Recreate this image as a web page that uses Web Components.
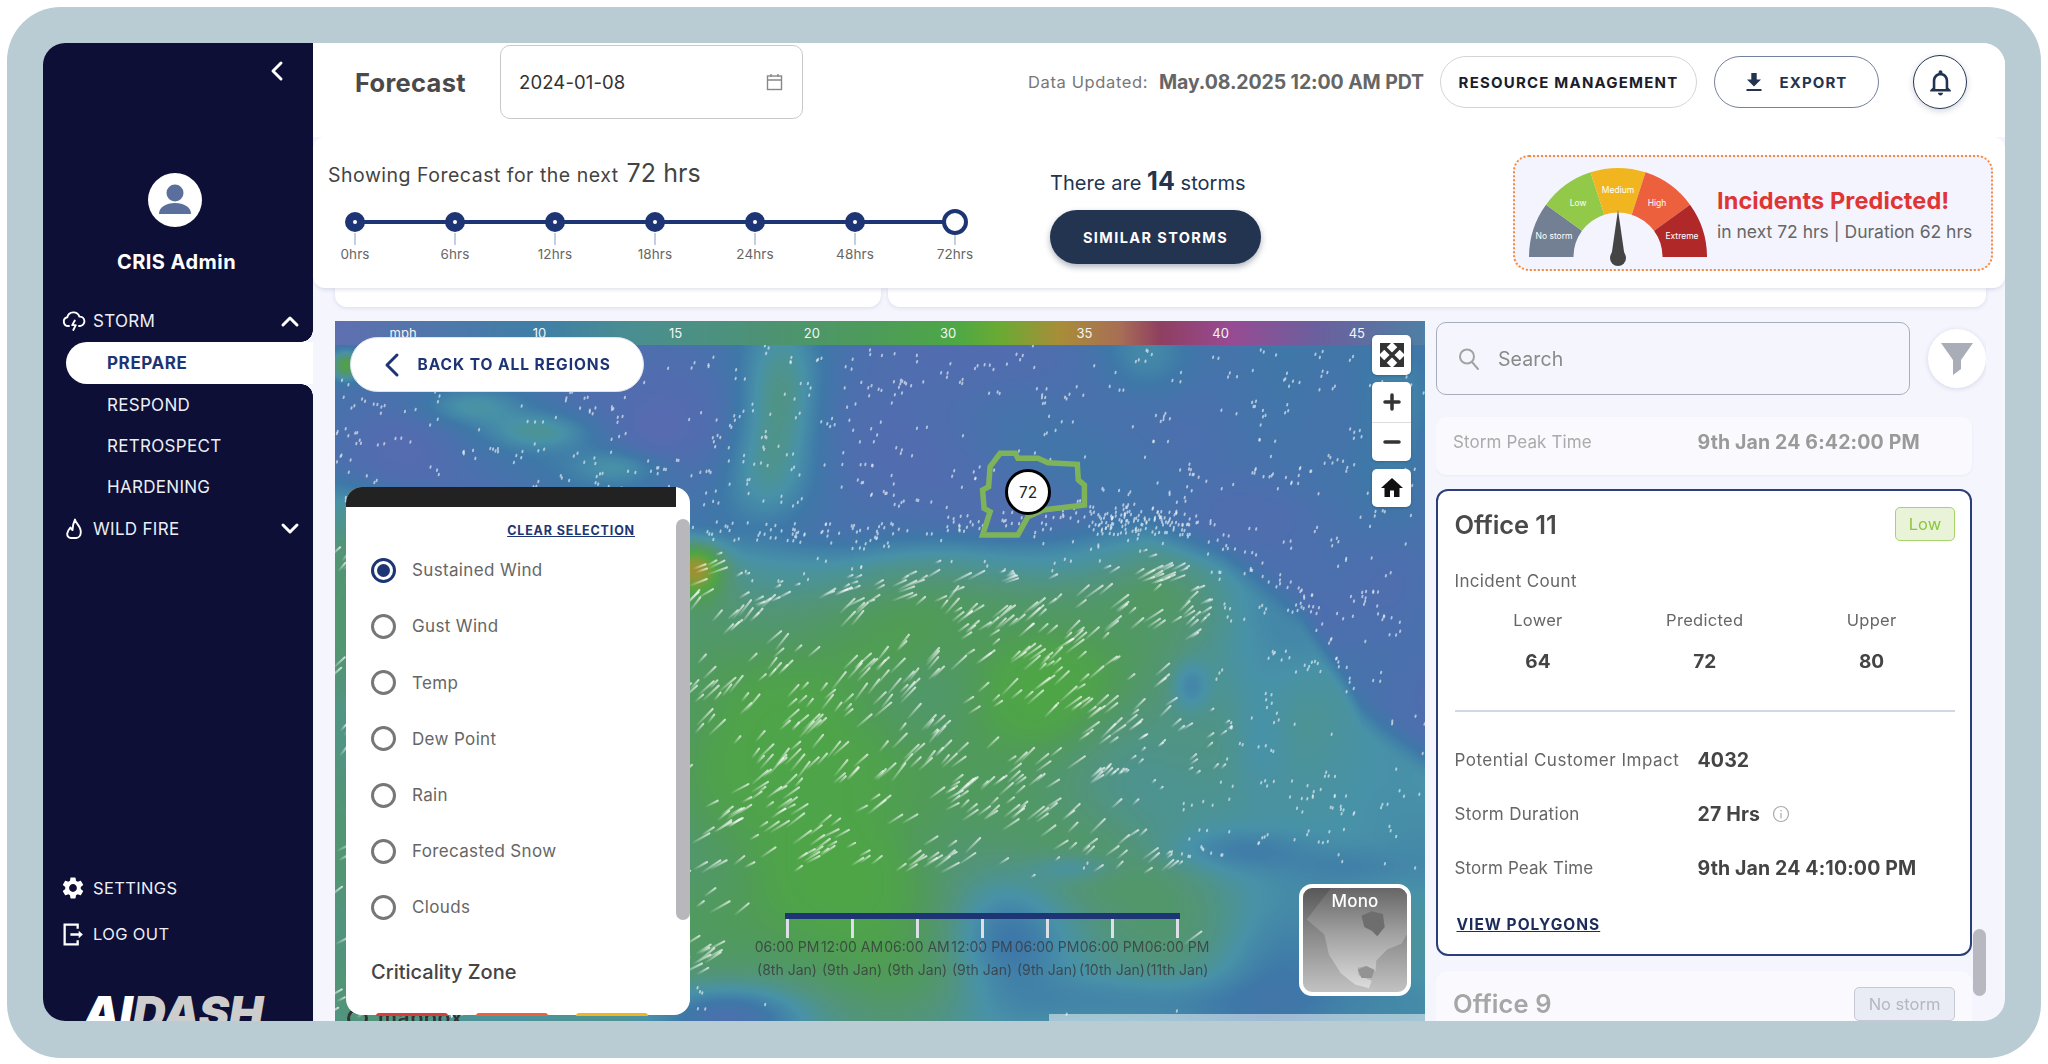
<!DOCTYPE html>
<html lang="en"><head><meta charset="utf-8"><title>Forecast</title>
<style>
html,body{margin:0;background:#fff;font-family:Inter,"Noto Sans",sans-serif;overflow:hidden}
</style></head><body>
<ai-app>
  <ai-sidebar slot="side">
    <ai-nav-row icon="cloud" trail="up">STORM</ai-nav-row>
    <ai-nav-row sub active>PREPARE</ai-nav-row>
    <ai-nav-row sub>RESPOND</ai-nav-row>
    <ai-nav-row sub>RETROSPECT</ai-nav-row>
    <ai-nav-row sub>HARDENING</ai-nav-row>
    <ai-nav-row icon="flame" trail="down">WILD FIRE</ai-nav-row>
  </ai-sidebar>
  <ai-topbar slot="main"></ai-topbar>
  <ai-forecast-panel slot="main"></ai-forecast-panel>
  <ai-peek-row slot="main"></ai-peek-row>
  <ai-content slot="main">
    <ai-map></ai-map>
    <ai-side-list></ai-side-list>
  </ai-content>
</ai-app>
<script>
const def=(name,css,html,init)=>customElements.define(name,class extends HTMLElement{
  constructor(){super();this.attachShadow({mode:'open'}).innerHTML=`<style>${css}</style>${typeof html==='function'?html(this):html}`}
  connectedCallback(){init&&init(this)}
});
const NAVY='#1e3575',INK='#22344f';
const I={
 cloud:'<svg width="24" height="24" viewBox="0 0 24 24" fill="none" stroke="#fff" stroke-width="1.9" stroke-linecap="round" stroke-linejoin="round"><path d="M7 17H6.2a4.4 4.4 0 0 1-.9-8.7A6.3 6.3 0 0 1 17.4 7.6 4.7 4.7 0 0 1 18 17h-1"/><path d="M12.8 11.5l-2.6 4.6h3.6L11.3 21"/></svg>',
 flame:'<svg width="24" height="24" viewBox="0 0 24 24" fill="none" stroke="#fff" stroke-width="1.9" stroke-linejoin="round"><path d="M13 2.5c.4 3.5 5.8 6.6 5.8 12.4 0 3.4-2 6.100-4.600 6.100H8.800C6.600 21 5 19 5.200 16.600c.2-2.600 2-4.600 3.300-6.100.8 1.500 1.300 2.300 2 2.600C10.700 9.500 11.500 5.500 13 2.500z"/></svg>',
 up:'<svg width="20" height="14" viewBox="0 0 20 14" fill="none" stroke="#fff" stroke-width="3" stroke-linecap="round" stroke-linejoin="round"><path d="M3 11l7-7 7 7"/></svg>',
 down:'<svg width="20" height="14" viewBox="0 0 20 14" fill="none" stroke="#fff" stroke-width="3" stroke-linecap="round" stroke-linejoin="round"><path d="M3 3l7 7 7-7"/></svg>',
 gear:'<svg width="26" height="26" viewBox="0 0 24 24" fill="#fff"><path d="M19.14 12.94c.04-.3.06-.61.06-.94 0-.32-.02-.64-.07-.94l2.03-1.58a.49.49 0 0 0 .12-.61l-1.92-3.32a.488.488 0 0 0-.59-.22l-2.39.96c-.5-.38-1.03-.7-1.62-.94l-.36-2.54a.484.484 0 0 0-.48-.41h-3.84c-.24 0-.43.17-.47.41l-.36 2.54c-.59.24-1.13.57-1.62.94l-2.39-.96c-.22-.08-.47 0-.59.22L2.74 8.87c-.12.21-.08.47.12.61l2.03 1.58c-.05.3-.09.63-.09.94s.02.64.07.94l-2.03 1.58a.49.49 0 0 0-.12.61l1.92 3.32c.12.22.37.29.59.22l2.39-.96c.5.38 1.03.7 1.62.94l.36 2.54c.05.24.24.41.48.41h3.84c.24 0 .44-.17.47-.41l.36-2.54c.59-.24 1.13-.56 1.62-.94l2.39.96c.22.08.47 0 .59-.22l1.92-3.32c.12-.22.07-.47-.12-.61l-2.01-1.58zM12 15.6c-1.98 0-3.6-1.62-3.6-3.6s1.62-3.6 3.6-3.6 3.6 1.62 3.6 3.6-1.62 3.6-3.6 3.6z"/></svg>',
 logout:'<svg width="25" height="25" viewBox="0 0 24 24" fill="none" stroke="#fff" stroke-width="2.2"><path d="M16 6.500V2.500H3.500v19H16v-4"/><path d="M9 12h9" /><path d="M17 8.500l4 3.500-4 3.500z" fill="#fff" stroke="none"/></svg>'
};

def('ai-app',`
 :host{display:block;position:relative;margin:7px 0 0 7px;width:2034px;height:1051px;box-sizing:border-box;background:#b9cbd3;border-radius:54px;padding:36px 36px 37px}
 .in{display:grid;grid-template-columns:270px 1fr;height:100%;border-radius:22px;overflow:hidden;background:#f4f5fd}
 .m{display:flex;flex-direction:column;min-width:0;overflow:hidden;border-radius:0}
`,`<div class="in"><slot name="side"></slot><div class="m"><slot name="main"></slot></div></div>`);

def('ai-sidebar',`
 :host{display:flex;flex-direction:column;background:#0d0f36;color:#fff;height:978px;overflow:hidden}
 .tr{height:56px;display:flex;align-items:center;justify-content:flex-end;padding-right:28px;flex:none}
 .av{width:54px;height:54px;border-radius:50%;background:#fff;margin:74px 0 0 105px;flex:none;display:flex}
 .nm{font-weight:700;font-size:20px;letter-spacing:.45px;line-height:24px;text-align:center;margin-top:23px;margin-left:-3px;flex:none}
 .nav{margin-top:26px;flex:none}
 .low{margin-top:auto;flex:none}
 .row{height:46px;display:flex;align-items:center;gap:7px;padding-left:17px;font-size:16.500px;font-weight:400;letter-spacing:.35px;color:#eceef5}
 .row:nth-child(2){gap:7.500px;padding-left:17.500px}
 .logo{height:26px;margin:38px 0 0 40px;overflow:hidden;font-weight:900;font-style:italic;font-size:46px;line-height:34px;letter-spacing:-.2px;color:#fff;white-space:nowrap;flex:none}
 .logo b{color:#cdcdcd;font-weight:900}
`,`<div class="tr"><svg width="16" height="22" viewBox="0 0 16 22" fill="none" stroke="#fff" stroke-width="3" stroke-linecap="round" stroke-linejoin="round"><path d="M12 3l-8 8 8 8"/></svg></div>
 <div class="av"><svg width="54" height="54" viewBox="0 0 54 54" fill="#5a6f9c"><circle cx="27" cy="20" r="8.500"/><path d="M11 41c0-7 7-11 16-11s16 4 16 11z"/></svg></div>
 <div class="nm">CRIS Admin</div>
 <div class="nav"><slot></slot></div>
 <div class="low"><div class="row">${I.gear}<span>SETTINGS</span></div><div class="row">${I.logout}<span>LOG OUT</span></div></div>
 <div class="logo">AI<b>DASH</b></div>`);

def('ai-nav-row',`
 :host{display:flex;align-items:center;position:relative;height:41.300px;box-sizing:border-box;font-size:17px;letter-spacing:.3px;color:#eceef5;padding-left:19px}
 :host([icon]){height:42px}
 :host([sub]){padding-left:64px}
 :host([active]){height:42px;margin-left:23px;padding-left:41px;background:#fff;color:${NAVY};font-weight:700;border-radius:21px 0 0 21px;letter-spacing:.6px}
 :host([active])::before,:host([active])::after{content:"";position:absolute;right:0;width:12px;height:12px;background:radial-gradient(circle at 0 0,transparent 11.5px,#f4f5fd 12px)}
 :host([active])::before{top:-12px}
 :host([active])::after{bottom:-12px;background:radial-gradient(circle at 0 100%,transparent 11.5px,#f4f5fd 12px)}
 .ic{width:31px;display:flex;flex:none}
 .tl{margin-left:auto;padding-right:13px;display:flex}
`,h=>{const a=h.getAttribute('icon'),t=h.getAttribute('trail');return `${a?`<span class="ic">${I[a]}</span>`:''}<slot></slot>${t?`<span class="tl">${I[t]}</span>`:''}`});

def('ai-pill',`
 :host{display:inline-flex;align-items:center;justify-content:center;gap:14px;height:52px;box-sizing:border-box;border-radius:26px;background:#fff;border:1.5px solid #d2d4d8;font-weight:700;font-size:15px;letter-spacing:1.2px;color:#1c1c2a;flex:none}
 :host([dark]){border-color:#74819a;color:${INK};letter-spacing:1.1px}
`,`<slot></slot>`);

def('ai-topbar',`
 :host{display:flex;align-items:center;flex:none;height:78px;margin-bottom:16px;background:#fff;padding-left:42px;box-shadow:0 16px 0 #fff}
 h1{margin:0;width:145px;flex:none;font-size:25.500px;font-weight:700;color:#4a4a4a;letter-spacing:.3px}
 .date{width:303px;height:74px;box-sizing:border-box;border:1.5px solid #c9c9c9;border-radius:10px;display:flex;align-items:center;justify-content:space-between;padding:0 19px 0 18px;font-size:18.500px;letter-spacing:.12px;color:#333;flex:none}
 .lb{margin-left:225px;font-size:16.500px;color:#777;width:131px;flex:none;letter-spacing:.62px;white-space:nowrap}
 .v{font-size:19.500px;font-weight:700;color:#666;width:281px;flex:none;white-space:nowrap;letter-spacing:-.1px}
 ai-pill:nth-of-type(1){width:257px}
 ai-pill:nth-of-type(2){width:165px;margin-left:17px}
 .bell{width:54px;height:54px;margin-left:34px;box-sizing:border-box;border:1.5px solid ${INK};border-radius:50%;display:flex;align-items:center;justify-content:center;box-shadow:0 2px 6px rgba(30,40,80,.2);flex:none}
`,`<h1>Forecast</h1>
 <div class="date"><span>2024-01-08</span><svg width="17" height="18" viewBox="0 0 17 18" fill="none" stroke="#888" stroke-width="1.400"><rect x="1.500" y="3" width="14" height="13.500"/><path d="M1.500 7h14M5 1v3M12 1v3"/></svg></div>
 <span class="lb">Data Updated:</span><span class="v">May.08.2025 12:00 AM PDT</span>
 <ai-pill>RESOURCE MANAGEMENT</ai-pill>
 <ai-pill dark><svg width="24" height="24" viewBox="0 0 24 24" fill="${INK}" style="margin-left:-4px"><path d="M19 9.500h-4.300V3H9.300v6.500H5l7 7zM4.500 19h15v2h-15z"/></svg><span>EXPORT</span></ai-pill>
 <div class="bell"><svg width="31" height="31" viewBox="0 0 24 24" fill="${INK}"><path d="M12 22c1.100 0 2-.9 2-2h-4c0 1.100.9 2 2 2zm6-6v-5c0-3.070-1.630-5.640-4.500-6.320V4c0-.83-.67-1.500-1.500-1.500s-1.500.67-1.500 1.500v.68C7.640 5.360 6 7.920 6 11v5l-2 2v1h16v-1l-2-2zm-2 1H8v-6c0-2.480 1.510-4.500 4-4.500s4 2.020 4 4.500v6z"/></svg></div>`);

def('ai-stepper',`
 :host{display:grid;grid-template-columns:repeat(7,100px);margin:19px 0 0 -23px}
 .s{display:flex;flex-direction:column;align-items:center;position:relative}
 .n{height:26px;display:flex;align-items:center;justify-content:center;position:relative;z-index:1}
 .d{width:20px;height:20px;border-radius:50%;background:${NAVY};display:flex;align-items:center;justify-content:center}
 .d i{width:4px;height:4px;background:#fff;border-radius:50%}
 .last .d{width:26px;height:26px;background:#fff;border:4px solid ${NAVY};box-sizing:border-box}
 .last .d i{display:none}
 .s:not(.last)::after{content:"";position:absolute;left:50%;width:100%;top:11px;height:4px;background:${NAVY}}
 .t{width:2px;height:12px;background:#c5cfe3;margin-top:-2px}
 .l{font-size:13.500px;line-height:18px;color:#666;white-space:nowrap;letter-spacing:.1px}
`,`${['0hrs','6hrs','12hrs','18hrs','24hrs','48hrs','72hrs'].map((t,i)=>`<div class="s${i==6?' last':''}"><div class="n"><div class="d"><i></i></div></div><div class="t"></div><div class="l">${t}</div></div>`).join('')}`);

def('ai-gauge',`:host{display:block;width:180px;height:100px;flex:none} svg{display:block} text{font-family:Inter,sans-serif;fill:#fff;font-size:8.500px;text-anchor:middle}`,()=>{
 const R=89,r=44.5,c=['#737f92','#92c949','#f1b61f','#ec603d','#b02828'];
 const p=(rad,a)=>`${(-rad*Math.cos(a*Math.PI/180)).toFixed(2)} ${(-rad*Math.sin(a*Math.PI/180)).toFixed(2)}`;
 const seg=c.map((f,i)=>{const a=i*36,b=a+36;return `<path fill="${f}" d="M${p(R,a)}A${R} ${R} 0 0 1 ${p(R,b)}L${p(r,b)}A${r} ${r} 0 0 0 ${p(r,a)}Z"/>`}).join('');
 return `<svg width="180" height="100" viewBox="-90 -90 180 100">${seg}
 <text x="-64" y="-18">No storm</text><text x="-40" y="-51">Low</text><text x="0" y="-64">Medium</text><text x="39" y="-51">High</text><text x="64" y="-18">Extreme</text>
 <path fill="#444" d="M0-47L-6.500-2h13z"/><circle cx="0" cy="1" r="8" fill="#444"/></svg>`});

def('ai-forecast-panel',`
 :host{display:flex;align-items:flex-start;flex:none;height:151px;position:relative;z-index:2;background:#fff;border-radius:12px;box-shadow:0 3px 5px -2px rgba(40,50,100,.18);padding-left:15px;box-sizing:border-box}
 .c1{width:722px;flex:none;padding-top:21px}
 h2{margin:0;font-size:19.500px;font-weight:400;line-height:30px;color:#444;letter-spacing:.5px;white-space:nowrap}
 h2 b{font-weight:400;font-size:25px;margin-left:2px;letter-spacing:.05px}
 .c2{width:463px;flex:none;padding-top:28.500px}
 .c2 p{margin:0;font-size:20px;line-height:30px;color:${INK};white-space:nowrap;letter-spacing:.05px}
 .c2 b{font-size:25px;font-weight:700}
 .btn{width:211px;height:54px;margin-top:12.500px;border-radius:27px;background:${INK};color:#fff;display:flex;align-items:center;justify-content:center;font-weight:700;font-size:14.500px;letter-spacing:1.4px;box-shadow:0 3px 6px rgba(30,40,70,.35)}
 .box{width:480px;height:116px;margin-top:18px;box-sizing:border-box;border:2.500px dotted #f58a3c;border-radius:16px;background:#f3f4fd;display:flex;align-items:flex-start;padding:10px 0 0 13px;flex:none}
 .tx{margin-left:9px;padding-top:18px}
 .a{font-weight:700;font-size:23.500px;line-height:32px;color:#e03535;white-space:nowrap;letter-spacing:.1px}
 .b{font-size:17.500px;line-height:28px;margin-top:1px;color:#666;white-space:nowrap}
`,`<div class="c1"><h2>Showing Forecast for the next <b>72 hrs</b></h2><ai-stepper></ai-stepper></div>
 <div class="c2"><p>There are <b>14</b> storms</p><div class="btn">SIMILAR STORMS</div></div>
 <div class="box"><ai-gauge></ai-gauge><div class="tx"><div class="a">Incidents Predicted!</div><div class="b">in next 72 hrs | Duration 62 hrs</div></div></div>`);

def('ai-peek-row',`
 :host{display:flex;gap:7px;height:19px;flex:none;padding:0 19px 0 22px;margin-bottom:14px}
 div{background:#fff;border-radius:0 0 12px 12px;box-shadow:0 1px 4px rgba(40,50,100,.12)}
 .a{width:546px;flex:none}.b{flex:1}
`,`<div class="a"></div><div class="b"></div>`);

def('ai-content',`:host{display:grid;grid-template-columns:1090px 550px;column-gap:11px;padding-left:22px;height:700px;flex:none}`,`<slot></slot>`);

def('ai-radio',`
 :host{display:flex;align-items:center;height:56.200px;font-size:17px;color:#666;letter-spacing:.35px}
 i{width:25px;height:25px;box-sizing:border-box;border:3px solid #777;border-radius:50%;margin-right:16px;display:flex;align-items:center;justify-content:center;flex:none}
 :host([on]) i{border-color:${NAVY}}
 :host([on]) i::after{content:"";width:13px;height:13px;background:${NAVY};border-radius:50%}
`,`<i></i><slot></slot>`);

def('ai-layer-panel',`
 :host{display:block;position:absolute;left:11px;top:166px;width:344px;height:528px;background:#fff;border-radius:16px;z-index:3}
 .band{height:19.500px;margin-right:14px;background:#222;border-radius:16px 0 0 0}
 .clr{margin:14px 55px 0 0;text-align:right;font-size:12.500px;line-height:20px;font-weight:700;color:${NAVY};text-decoration:underline;letter-spacing:.85px}
 .list{margin:1.700px 0 0 25px}
 h3{margin:22px 0 0 25px;font-size:20px;font-weight:500;line-height:28px;color:#444;letter-spacing:0}
 .chips{display:flex;gap:28px;margin:27px 0 0 30px}
 .chips i{width:72px;height:3.500px;border-radius:3px 3px 0 0}
 .th{position:absolute;right:0;top:32px;width:14px;height:401px;background:#b8b8bc;border-radius:7px}
`,`<div class="band"></div><div class="clr">CLEAR SELECTION</div>
 <div class="list"><ai-radio on>Sustained Wind</ai-radio><ai-radio>Gust Wind</ai-radio><ai-radio>Temp</ai-radio><ai-radio>Dew Point</ai-radio><ai-radio>Rain</ai-radio><ai-radio>Forecasted Snow</ai-radio><ai-radio>Clouds</ai-radio></div>
 <h3>Criticality Zone</h3>
 <div class="chips"><i style="background:#dd3b3b"></i><i style="background:#ec603d"></i><i style="background:#f1b61f"></i></div>
 <div class="th"></div>`);

def('ai-time-axis',`
 :host{display:block;position:absolute;left:419.500px;top:592px;width:455px;color:rgba(55,55,60,.78);z-index:1}
 .bar{height:5.500px;background:${NAVY};margin:0 30px 0 30.500px}
 .g{display:grid;grid-template-columns:repeat(7,65px)}
 .g div{display:flex;flex-direction:column;align-items:center;font-size:14px;white-space:nowrap}
 i{width:3px;height:19px;background:#dcdfe6}
 span{line-height:18px}
 span+span{line-height:23px;margin-top:2.500px}
`,()=>{const a=[['06:00 PM','8th'],['12:00 AM','9th'],['06:00 AM','9th'],['12:00 PM','9th'],['06:00 PM','9th'],['06:00 PM','10th'],['06:00 PM','11th']];
 return `<div class="bar"></div><div class="g">${a.map(x=>`<div><i></i><span>${x[0]}</span><span>(${x[1]} Jan)</span></div>`).join('')}</div>`});

def('ai-map-ctrl',`
 :host{display:flex;flex-direction:column;gap:7px;position:absolute;right:14px;top:14px;width:39px;z-index:2}
 div{background:#fff;border-radius:5px;display:flex;align-items:center;justify-content:center;box-shadow:0 1px 3px rgba(0,0,0,.2)}
 .f{height:40px}.z{height:79px;flex-direction:column}.z span{height:39.500px;display:flex;align-items:center;justify-content:center;width:100%}
 .z span+span{border-top:1px solid #ddd;box-sizing:border-box}
 .h{height:38px;margin-top:1px}
`,`<div class="f"><svg width="28" height="28" viewBox="0 0 28 28" fill="#333" stroke="#333"><path stroke-width="3.500" d="M5 5l18 18M23 5L5 23"/><path stroke="none" d="M2 2h11L9.500 5.500 6 9l-4 4zM26 2v11l-3.500-3.500L19 6l-4-4zM2 26V15l3.500 3.500L9 22l4 4zM26 26H15l3.500-3.500L22 19l4-4z"/></svg></div>
 <div class="z"><span><svg width="18" height="18" viewBox="0 0 18 18" stroke="#333" stroke-width="3.500" stroke-linecap="round"><path d="M9 2v14M2 9h14"/></svg></span><span><svg width="18" height="18" viewBox="0 0 18 18" stroke="#333" stroke-width="3.500" stroke-linecap="round"><path d="M2 9h14"/></svg></span></div>
 <div class="h"><svg width="24" height="24" viewBox="0 0 24 24" fill="#111"><path d="M10 21v-6.500h4V21h5.500v-9H23L12 2 1 12h3.500v9z"/></svg></div>`);

def('ai-style-thumb',`
 :host{display:block;position:absolute;right:14px;bottom:25px;width:112px;height:112px;box-sizing:border-box;border:4px solid #fff;border-radius:13px;overflow:hidden;z-index:2;background:linear-gradient(#585858,#8a8a8a 45%,#c2c2c2)}
 span{position:absolute;left:0;right:0;top:3px;text-align:center;color:#fff;font-size:17px;font-weight:500;letter-spacing:.2px}
 svg{position:absolute;inset:0}
`,`<svg width="104" height="104" viewBox="0 0 112 112"><defs><linearGradient id="l" x1="0" y1="0" x2="0" y2="1"><stop offset="0" stop-color="#666"/><stop offset=".45" stop-color="#a0a0a0"/><stop offset="1" stop-color="#dcdcdc"/></linearGradient></defs>
 <path fill="url(#l)" d="M4 34L23 50 28 72 41 92 56 104 71 108 74 100 60 94 59 86 68 84 78 90 79 78 91 66 106 60 112 50V0H30z"/>
 <path fill="#6e6e6e" d="M63 30L74 25 86 28 88 42 80 52 74 46 66 42z"/>
 <path fill="#939393" d="M59 88L68 84 77 88 74 97 63 97z"/></svg><span>Mono</span>`);

def('ai-map',`
 :host{display:block;position:relative;width:1090px;height:700px;overflow:hidden;background:#4f73ad}
 canvas{position:absolute;inset:0;display:block}
 .leg{position:absolute;left:0;right:0;top:0;height:24px;display:grid;grid-template-columns:repeat(8,1fr);align-items:center;text-align:center;color:#f2f5f4;font-size:13px;background:linear-gradient(90deg,#5f6fb0,#3f7fa6 19%,#4a8f8f 28%,#4d9275 39%,#4d9c58 50%,#4da845 57%,#6aaa33 61%,#a88d38 66.5%,#a86e55 72%,#8f3f60 75.7%,#984a92 82%,#6b5f9e 90%,#4f7fa4)}
 .back{position:absolute;left:14.500px;top:16px;width:294px;height:55px;box-sizing:border-box;border-radius:28px;background:#fff;border:1px solid #dfe3ee;display:flex;align-items:center;padding-left:33px;gap:18px;color:${NAVY};font-weight:700;font-size:15.500px;letter-spacing:.95px;z-index:2}
 .poly{position:absolute;inset:0}
 .mk{position:absolute;left:670px;top:148px;width:46px;height:46px;box-sizing:border-box;border:3px solid #000;border-radius:50%;background:#fff;display:flex;align-items:center;justify-content:center;font-size:15.500px;color:#222}
 .mbx{position:absolute;left:12px;bottom:-10px;display:flex;align-items:center;gap:10px;color:#333;font-weight:600;font-size:21px;line-height:26px;letter-spacing:.6px}
 .mbx i{width:15px;height:15px;border-radius:50%;border:3px solid #333;display:block}
 .attr{position:absolute;left:714px;right:0;bottom:0;height:7px;background:rgba(255,255,255,.5)}
`,`<canvas width="1090" height="700"></canvas>
 <div class="leg"><span>mph</span><span>10</span><span>15</span><span>20</span><span>30</span><span>35</span><span>40</span><span>45</span></div>
 <div class="back"><svg width="16" height="26" viewBox="0 0 16 26" fill="none" stroke="${NAVY}" stroke-width="3" stroke-linecap="round" stroke-linejoin="round"><path d="M13 3L3 13l10 10"/></svg><span>BACK TO ALL REGIONS</span></div>
 <svg class="poly" width="1090" height="700"><path fill="none" stroke="#7fb35a" stroke-width="5.500" d="M647.600 214L655.100 190.700 649.100 187.300 647.600 169 653.600 165.700 655.100 145.700 665.200 132.300H680.300L682.900 137.300 703 137.300 713 141.700 742.300 143.300 743.300 159 749.400 164V184L708 189 692.900 195.700 682.900 214Z"/></svg>
 <div class="mk">72</div>
 <div class="mbx"><i></i><span>mapbox</span></div>
 <div class="attr"></div>
 <ai-map-ctrl></ai-map-ctrl><ai-style-thumb></ai-style-thumb><ai-time-axis></ai-time-axis><ai-layer-panel></ai-layer-panel>`,
 host=>{
  const cv=host.shadowRoot.querySelector('canvas'),cx=cv.getContext('2d');
  const ss=t=>{t=Math.max(0,Math.min(1,t));return t*t*(3-2*t)};
  const E=[[300,470],[640,520],[700,535],[850,540],[950,530],[1050,525],[1150,518],[1220,545],[1300,600],[1360,700],[1440,760]];
  const edge=x=>{for(let i=1;i<E.length;i++)if(x<=E[i][0]){const a=E[i-1],b=E[i];return a[1]+(b[1]-a[1])*(x-a[0])/(b[0]-a[0])}return 760};
  const blobs=[[781,380,38,60,.3],[770,450,45,60,.26],[756,490,50,45,.16],[1144,353,50,45,.3],[1395,420,40,90,.25],[1010,345,50,30,-.05],[690,413,60,60,-.1],[967,370,110,60,-.12],[1230,520,80,35,-.1],[1280,400,60,60,.05],[880,470,70,60,-.08],
   [840,760,125,100,.26],[1035,688,72,66,.3],[821,887,110,65,.28],[737,662,85,60,.16],[700,800,55,65,.12],[900,640,90,50,.08],[1165,582,60,40,.08],[1072,590,90,40,.06],
   [1189,684,18,24,-.22],[1259,734,30,55,-.12],[1235,849,70,20,-.16],[1072,866,40,14,-.18],[1003,942,58,55,-.32],[1400,570,50,70,-.14],[723,1014,70,30,-.34],[1352,866,60,20,-.12],[1150,1000,140,30,-.2],
   [345,364,15,14,.7],[400,446,50,36,-.15],[470,405,50,18,.24],[540,430,50,18,.28],[620,465,50,18,.24],[650,430,30,30,-.1],[1270,960,60,50,-.15],[1400,1000,70,40,-.12],[880,960,130,60,.08]];
  const F=(x,y)=>{
   const e=edge(x);
   let v=.27+.045*Math.sin(x/41+Math.cos(y/61)*2)+.035*Math.sin(y/33-x/90);
   const T=ss((y-e+16)/50),fd=1-ss((x-1150)/170),bt=1-ss((y-960)/70)*.55;
   v+=.28*T+.17*ss((y-e-12)/70)*fd*bt;
   for(const b of blobs){const dx=(x-b[0])/b[2],dy=(y-b[1])/b[3];const d=dx*dx+dy*dy;if(d<9)v+=b[4]*Math.exp(-d)}
   if(v>.96)v=.96+(v-.96)*.3;
   const sd=((x-695)/26)**2+((y-567)/26)**2;if(sd<9)v+=.65*Math.exp(-sd);
   return v};
  const S=[[0,90,106,178],[.2,78,110,174],[.38,62,120,168],[.55,72,146,168],[.72,82,148,122],[.88,80,155,88],[1,78,166,68],[1.25,150,150,50],[1.5,200,90,55]];
  const col=v=>{if(v<=0)return S[0].slice(1);for(let i=1;i<S.length;i++)if(v<=S[i][0]){const a=S[i-1],b=S[i],t=(v-a[0])/(b[0]-a[0]);return [a[1]+(b[1]-a[1])*t,a[2]+(b[2]-a[2])*t,a[3]+(b[3]-a[3])*t]}return S[S.length-1].slice(1)};
  const k=3,w=Math.ceil(1090/k),h=Math.ceil(700/k),of=document.createElement('canvas');of.width=w;of.height=h;
  const oc=of.getContext('2d'),im=oc.createImageData(w,h);
  for(let j=0;j<h;j++)for(let i=0;i<w;i++){const c=col(F(i*k+335,j*k+321)),o=(j*w+i)*4;im.data[o]=c[0];im.data[o+1]=c[1];im.data[o+2]=c[2];im.data[o+3]=255}
  oc.putImageData(im,0,0);cx.imageSmoothingEnabled=true;cx.imageSmoothingQuality='high';cx.drawImage(of,0,0,w*k,h*k);
  cx.setTransform(1,0,0,1,-335,-321);
  let s=1234567;const R=()=>{s=s+0x6D2B79F5|0;let t=Math.imul(s^s>>>15,1|s);t=t+Math.imul(t^t>>>7,61|t)^t;return((t^t>>>14)>>>0)/4294967296};
  const part=(x,y)=>{
   if(y<346||y>1018)return;if(y>873&&x>714&&R()>.03)return;
   const v=F(x,y),e=edge(x),g=ss((v-.6)/.16)*ss((y-e-6)/26)*(1-ss((x-1230)/70));
   const len=1.800+g*(6+R()*14);
   const base=y<e+70?18:(x<950?(y>790?26:40):32);
   const ang=(-base-R()*14)*Math.PI/180,dx=Math.cos(ang)*len,dy=Math.sin(ang)*len;
   const gr=cx.createLinearGradient(x,y,x+dx,y+dy);gr.addColorStop(0,'rgba(255,255,255,.08)');gr.addColorStop(1,'rgba(255,255,255,.7)');
   const dot=len<3.500;
   cx.strokeStyle=dot?'rgba(232,238,244,.66)':gr;cx.lineWidth=dot?1.900:2.100;cx.lineCap='round';cx.beginPath();cx.moveTo(x,y);
   if(dot)cx.lineTo(x+.4,y-1.600);else cx.lineTo(x+dx,y+dy);cx.stroke()};
  for(let c=0;c<1080;c++){
   const x0=335+R()*1090,y0=346+R()*672,v=F(x0,y0);
   const n=v>.7?1+Math.floor(R()*4):1+Math.floor(R()*3);
   const sp=v>.7?18:10;
   for(let i=0;i<n;i++)part(x0+(R()-.5)*sp*2,y0+(R()-.5)*sp);
  }
  for(let i=0;i<180;i++){const t=R();const x=700+t*650,y=edge(x)+(R()-.75)*20;part(x,y)}
  for(let i=0;i<90;i++){const x=1090+R()*100,y=512+R()*24;part(x,y)}
  cx.setTransform(1,0,0,1,0,0);
 });

def('ai-office-card',`
 :host{display:block;width:536px;height:467px;box-sizing:border-box;border:2px solid #2a3f7a;border-radius:12px;background:#fff;padding:16px 15px 0 16.500px;flex:none;color:#666}
 .top{display:flex;align-items:center;justify-content:space-between;height:34px}
 h4{margin:0;font-size:25.500px;font-weight:600;color:#4a4a4a;letter-spacing:-.1px}
 .bd{height:34px;width:60px;box-sizing:border-box;display:flex;align-items:center;justify-content:center;background:#e8f3d8;border:1.5px solid #a5d46a;border-radius:5px;color:#8cc63f;font-size:16.500px}
 .ic{margin-top:27.500px;line-height:24px;font-size:17px;letter-spacing:.35px}
 .g{display:grid;grid-template-columns:repeat(3,1fr);text-align:center;margin-top:15.500px;line-height:24px;font-size:16.500px;letter-spacing:.3px}
 .g.v{margin-top:18px;font-weight:700;font-size:19px;color:#444;letter-spacing:0}
 hr{margin:36px 0 21px;border:0;height:1.500px;background:#d0d8e8}
 .r{display:grid;grid-template-columns:243px 1fr;height:54px;align-items:center;font-size:17px}
 .r b{font-size:19.500px;color:#444;font-weight:700;letter-spacing:.15px;display:flex;align-items:center;gap:12px}
 .vp{display:block;margin:20px 0 0 2px;line-height:20px;font-weight:700;font-size:15.500px;color:#1c2c5a;text-decoration:underline;letter-spacing:1px}
`,`<div class="top"><h4>Office 11</h4><span class="bd">Low</span></div>
 <div class="ic">Incident Count</div>
 <div class="g"><span>Lower</span><span>Predicted</span><span>Upper</span></div>
 <div class="g v"><span>64</span><span>72</span><span>80</span></div>
 <hr>
 <div class="r"><span style="letter-spacing:.5px">Potential Customer Impact</span><b>4032</b></div>
 <div class="r"><span style="letter-spacing:.3px">Storm Duration</span><b>27 Hrs <svg width="18" height="18" viewBox="0 0 18 18" fill="none" stroke="#aaa" stroke-width="1.200"><circle cx="9" cy="9" r="7.500"/><path d="M9 8v5.500M9 5v1.500"/></svg></b></div>
 <div class="r"><span style="letter-spacing:.1px">Storm Peak Time</span><b>9th Jan 24 4:10:00 PM</b></div>
 <a class="vp">VIEW POLYGONS</a>`);

def('ai-side-list',`
 :host{display:flex;flex-direction:column;position:relative;width:550px;height:700px;overflow:hidden}
 .se{display:flex;height:73px;margin-top:1px;flex:none}
 .in{width:474px;box-sizing:border-box;border:1.5px solid #a8adbc;border-radius:10px;display:flex;align-items:center;padding-left:21px;gap:18px;font-size:19.500px;color:#8a8a8a;flex:none;letter-spacing:.1px}
 .fl{width:58px;height:59px;margin:7px 0 0 18px;background:#fff;border-radius:50%;box-shadow:0 1px 5px rgba(40,50,100,.15);display:flex;align-items:center;justify-content:center;flex:none}
 .fd{width:536px;height:58px;margin-top:22px;box-sizing:border-box;background:#f9f9fe;border-radius:10px;box-shadow:0 1px 3px rgba(40,50,100,.05);display:grid;grid-template-columns:244.500px 1fr;align-items:center;padding:0 0 8px 17px;color:#aaa;font-size:17px;flex:none;letter-spacing:.1px}
 .fd b{font-size:19.500px;color:#9a9a9a;font-weight:700;letter-spacing:.15px}
 ai-office-card{margin-top:14px}
 .o9{width:536px;height:60px;margin-top:15px;background:#f9f9fe;border-radius:12px;padding:0 17px;box-sizing:border-box;display:flex;justify-content:space-between;align-items:flex-start;flex:none;color:#a6a6a6}
 .o9 h4{margin:16px 0 0;font-size:25.500px;font-weight:600;line-height:34px;letter-spacing:.1px}
 .o9 span{margin-top:16px;height:34px;width:101px;box-sizing:border-box;display:flex;align-items:center;justify-content:center;background:#e9ebf5;border:1.5px solid #c6c9d4;border-radius:5px;color:#b4b6c0;font-size:16.500px;flex:none}
 .sb{position:absolute;left:537px;top:608px;width:13px;height:67px;background:#b8b8c0;border-radius:7px}
`,`<div class="se"><div class="in"><svg width="22" height="24" viewBox="0 0 22 24" fill="none" stroke="#a3a3a3" stroke-width="2" stroke-linecap="round"><circle cx="9" cy="9.500" r="7"/><path d="M14 15l6 7"/></svg><span>Search</span></div>
 <div class="fl"><svg width="32" height="34" viewBox="0 0 32 34" fill="#a9adb8"><path d="M0 1h32L20 18v9l-8 6V18z"/></svg></div></div>
 <div class="fd"><span>Storm Peak Time</span><b>9th Jan 24 6:42:00 PM</b></div>
 <ai-office-card></ai-office-card>
 <div class="o9"><h4>Office 9</h4><span>No storm</span></div>
 <div class="sb"></div>`);
</script>
</body></html>
